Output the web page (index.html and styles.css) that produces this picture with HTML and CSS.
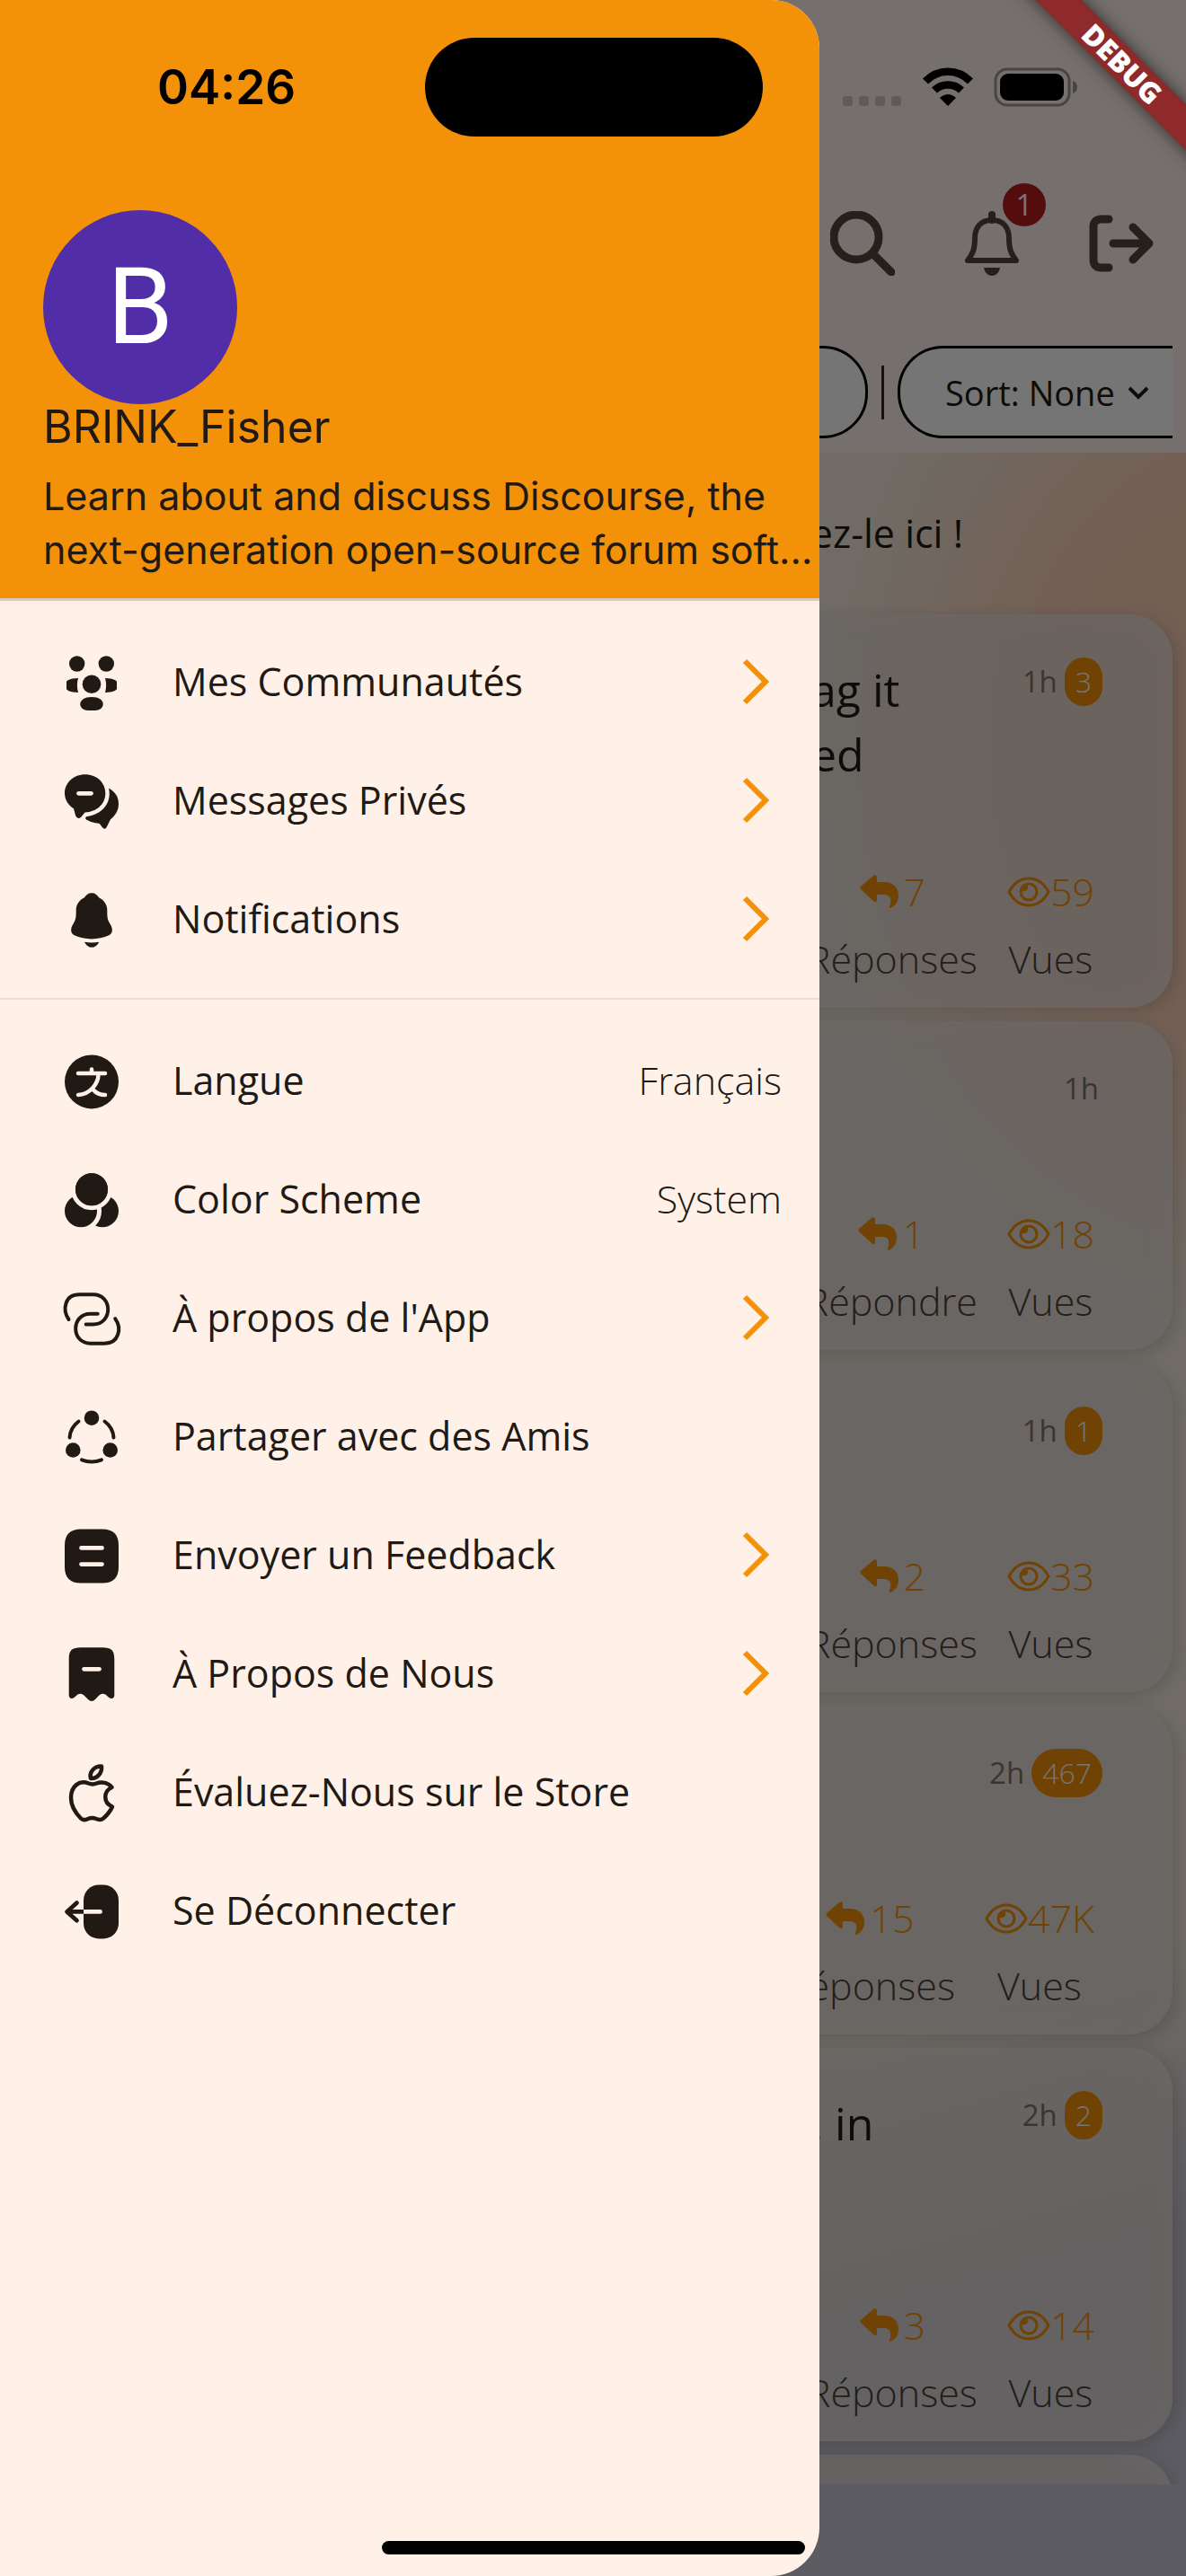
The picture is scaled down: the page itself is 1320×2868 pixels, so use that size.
FILE: index.html
```html
<!DOCTYPE html>
<html lang="fr">
    <head>
        <meta charset="UTF-8" />
        <meta name="viewport" content="width=device-width, initial-scale=1.0" />
        <title>Communautés</title>
        <link rel="stylesheet" href="styles.css">
    </head>
    <body>
        <svg class="sprite" aria-hidden="true">
            <symbol id="chevron" viewBox="0 0 36 54">
                <path d="M6 4 29 27 6 50" fill="none" stroke="currentColor" stroke-width="6" />
            </symbol>
            <symbol id="reply" viewBox="0 0 44 38">
                <path d="M1 13 15 1q4-2 4 2v5h8c11 0 16 7 16 15 0 7-4 12-9 14-2 0-1-1-1-2 3-8 1-13-7-13h-7v6q0 4-4 1L1 16q-1-1.500 0-3z" fill="currentColor" />
            </symbol>
            <symbol id="eye" viewBox="0 0 48 38">
                <path d="M2 19C8 8 15 4 24 4s16 4 22 15c-6 11-13 15-22 15S8 30 2 19z" fill="none" stroke="currentColor" stroke-width="3" />
                <circle cx="24" cy="19" r="9" fill="none" stroke="currentColor" stroke-width="3" />
                <path d="M23 12c1 5-2 7-7 6 1-4 3-6 7-6z" fill="currentColor" />
            </symbol>
        </svg>

        <div class="app">
            <header class="topbar">
                <div class="actions">
                    <button class="icon-btn" aria-label="Rechercher">
                        <svg viewBox="0 0 72 72" fill="none" stroke="currentColor" stroke-width="9">
                            <circle cx="29" cy="29" r="25" />
                            <path d="m48 48 20 20" stroke-linecap="round" />
                        </svg>
                    </button>
                    <button class="icon-btn" aria-label="Notifications">
                        <svg viewBox="0 0 72 72">
                            <path d="M36 10c-12 0-19 8-19 20 0 12-2 17-8 25h54c-6-8-8-13-8-25 0-12-7-20-19-20z" fill="none" stroke="currentColor" stroke-width="6" stroke-linejoin="round" />
                            <path d="M36 4v6" stroke="currentColor" stroke-width="8" stroke-linecap="round" />
                            <path d="M27 63h18c-1 6-5 9-9 9s-8-3-9-9z" fill="currentColor" />
                        </svg>
                        <span class="count">1</span>
                    </button>
                    <button class="icon-btn" aria-label="Se déconnecter">
                        <svg viewBox="0 0 72 72" fill="none" stroke="currentColor" stroke-width="9" stroke-linecap="round" stroke-linejoin="round">
                            <path d="M22 9h-8q-9 0-9 9v36q0 9 9 9h8M27 36h39M49 18l18 18-18 18" />
                        </svg>
                    </button>
                </div>
                <div class="filters">
                    <button class="pill pill-empty" aria-label="Filtre"></button>
                    <span class="bar"></span>
                    <button class="pill pill-sort">Sort: None
                        <svg viewBox="0 0 24 16" width="24" height="16"><path d="m2 3 10 10L22 3" fill="none" stroke="currentColor" stroke-width="4" /></svg>
                    </button>
                </div>
            </header>

            <main class="feed">
                <p class="prompt">ez-le ici !</p>

                <article class="card card-tall">
                    <div class="card-head">
                        <h2>ag it<br />ed</h2>
                        <span class="time">1h</span><span class="badge">3</span>
                    </div>
                    <div class="stats">
                        <div class="stat"><span class="num reply"><svg><use href="#reply" /></svg>7</span><span>Réponses</span></div>
                        <div class="stat"><span class="num"><svg><use href="#eye" /></svg>59</span><span>Vues</span></div>
                    </div>
                </article>

                <article class="card">
                    <div class="card-head">
                        <span class="time">1h</span>
                    </div>
                    <div class="stats">
                        <div class="stat"><span class="num reply"><svg><use href="#reply" /></svg>1</span><span>Répondre</span></div>
                        <div class="stat"><span class="num"><svg><use href="#eye" /></svg>18</span><span>Vues</span></div>
                    </div>
                </article>

                <article class="card">
                    <div class="card-head">
                        <span class="time">1h</span><span class="badge">1</span>
                    </div>
                    <div class="stats">
                        <div class="stat"><span class="num reply"><svg><use href="#reply" /></svg>2</span><span>Réponses</span></div>
                        <div class="stat"><span class="num"><svg><use href="#eye" /></svg>33</span><span>Vues</span></div>
                    </div>
                </article>

                <article class="card">
                    <div class="card-head">
                        <span class="time">2h</span><span class="badge">467</span>
                    </div>
                    <div class="stats">
                        <div class="stat"><span class="num reply"><svg><use href="#reply" /></svg>15</span><span>Réponses</span></div>
                        <div class="stat"><span class="num"><svg><use href="#eye" /></svg>47K</span><span>Vues</span></div>
                    </div>
                </article>

                <article class="card card-tall">
                    <div class="card-head">
                        <h2>. in</h2>
                        <span class="time">2h</span><span class="badge">2</span>
                    </div>
                    <div class="stats">
                        <div class="stat"><span class="num reply"><svg><use href="#reply" /></svg>3</span><span>Réponses</span></div>
                        <div class="stat"><span class="num"><svg><use href="#eye" /></svg>14</span><span>Vues</span></div>
                    </div>
                </article>

                <article class="card"></article>
            </main>
            <footer class="bottom"></footer>
        </div>

        <div class="scrim"></div>

        <aside class="drawer">
            <div class="profile">
                <div class="avatar">B</div>
                <div class="name">BRINK_Fisher</div>
                <p class="about">Learn about and discuss Discourse, the next-generation open-source forum soft...</p>
            </div>

            <nav class="menu">
                <a class="item" href="#">
                    <svg class="icon" viewBox="0 0 72 72" fill="currentColor">
                        <circle cx="19.700" cy="16" r="8.700" />
                        <circle cx="52.300" cy="16" r="8.700" />
                        <circle cx="36" cy="38.700" r="10.300" />
                        <path d="M21 32C12 32 8 35 8 36v8c0 1 4 4 13 4-1.500-5-1.500-11 0-16zM51 32c9 0 13 3 13 4v8c0 1-4 4-13 4 1.500-5 1.500-11 0-16z" />
                        <path d="M36 53c8 0 12.700 3.500 12.700 8 0 4-4 7-8.700 7h-8c-5 0-8.700-3-8.700-7 0-4.500 5-8 12.700-8z" />
                    </svg>
                    <span>Mes Communautés</span>
                    <svg class="chevron"><use href="#chevron" /></svg>
                </a>
                <a class="item" href="#">
                    <svg class="icon" viewBox="0 0 72 72" fill="currentColor">
                        <path d="M28.700 7.300C16 7.300 6 16.500 6 28.300c0 7 4 13 10 17l2 7.500c1.500 4 5 4 7 1l3.500-4.300C42 49 51.300 40 51.300 28.300S42 7.300 28.700 7.300z" />
                        <path d="M55 22.500C63 27 66 33 66 40c0 8-4 13-9 17.300l-4 8c-1 3-3.500 3-5 1L44.700 62C38 61 34 60 30 57.500c-1.500-1.500-1-3 1-3.500 16-2 28-15 24-31.500z" />
                        <path class="cut" d="M21.500 28.300h14" stroke-width="4.700" />
                    </svg>
                    <span>Messages Privés</span>
                    <svg class="chevron"><use href="#chevron" /></svg>
                </a>
                <a class="item" href="#">
                    <svg class="icon" viewBox="0 0 72 72" fill="currentColor">
                        <path d="M36 7.300c-4 0-6 2-8 5-6 3-9.300 8-9.300 14 0 7 0 10-3 15-4 6-3 11 1 13 11 5.500 27.600 5.500 38.600 0 4-2 5-7 1-13-3-5-3-8-3-15 0-6-3.300-11-9.300-14-2-3-4-5-8-5z" />
                        <path d="M28 61.700q8 1.500 16.300 0c-2 4-5 6-8.200 6s-6-2-8.100-6z" />
                    </svg>
                    <span>Notifications</span>
                    <svg class="chevron"><use href="#chevron" /></svg>
                </a>
            </nav>

            <nav class="menu">
                <a class="item" href="#">
                    <svg class="icon" viewBox="0 0 72 72" fill="currentColor">
                        <circle cx="36" cy="37.400" r="30" />
                        <path class="cut" d="M21 28h30M36 23.500V28M43.500 29c0 11-10 22.500-22.500 23M38 46.500c3 3.500 7 5.500 13 5.500" stroke-width="4.500" />
                    </svg>
                    <span>Langue</span>
                    <span class="value">Français</span>
                </a>
                <a class="item" href="#">
                    <svg class="icon" viewBox="0 0 72 72" fill="currentColor">
                        <circle cx="48" cy="49.300" r="18" />
                        <circle class="ring" cx="24" cy="49.300" r="20.500" />
                        <circle class="ring" cx="36" cy="25.300" r="20.500" />
                        <circle cx="36" cy="25.300" r="18" />
                    </svg>
                    <span>Color Scheme</span>
                    <span class="value">System</span>
                </a>
                <a class="item" href="#">
                    <svg class="icon wide" viewBox="0 0 72 72" fill="none" stroke="currentColor" stroke-width="4" stroke-linecap="round">
                        <path d="M10.500 38C3 27 6 10.300 22.300 10.300h15.400c22 0 22 33.100 0 33.100h-8" />
                        <path d="M42.700 31.700h-8c-22 0-22 33 0 33h15.500c16 0 19.800-16.700 12-27.500" />
                    </svg>
                    <span>À propos de l'App</span>
                    <svg class="chevron"><use href="#chevron" /></svg>
                </a>
                <a class="item" href="#">
                    <svg class="icon" viewBox="0 0 72 72" fill="currentColor">
                        <circle cx="36" cy="15.700" r="8.300" />
                        <circle cx="15.300" cy="51.500" r="8.300" />
                        <circle cx="56.700" cy="51.500" r="8.300" />
                        <path d="M11.500 37.500c.5-7.500 4-13.500 10-18M50.500 19.500c6 4.500 9.500 10.500 10 18M25 62.300q11 4.500 22 0" fill="none" stroke="currentColor" stroke-width="4" stroke-linecap="round" />
                    </svg>
                    <span>Partager avec des Amis</span>
                </a>
                <a class="item" href="#">
                    <svg class="icon" viewBox="0 0 72 72" fill="currentColor">
                        <path d="M24 7.400h24c12 0 18 6 18 18v24c0 12-6 18-18 18H24c-12 0-18-6-18-18v-24c0-12 6-18 18-18z" />
                        <path class="cut" d="M24.500 28.400h23M24.500 46.600h23" stroke-width="4.700" />
                    </svg>
                    <span>Envoyer un Feedback</span>
                    <svg class="chevron"><use href="#chevron" /></svg>
                </a>
                <a class="item" href="#">
                    <svg class="icon" viewBox="0 0 72 72" fill="currentColor">
                        <path d="M24 7.200h24c10 0 13.300 3 13.300 13V60c0 4-3 5-6 3l-4-3.500q-4-2-7 1L40 65q-4 4-8 0l-4.500-4.500q-3-3-7-1l-4 3.500c-3 2-5.800 1-5.800-3V20.200c0-10 3.300-13 13.300-13z" />
                        <path class="cut" d="M27.500 31.300h17" stroke-width="4.700" />
                    </svg>
                    <span>À Propos de Nous</span>
                    <svg class="chevron"><use href="#chevron" /></svg>
                </a>
                <a class="item" href="#">
                    <svg class="icon" viewBox="0 0 72 72" fill="none" stroke="currentColor" stroke-width="4.500" stroke-linejoin="round">
                        <path d="M58.500 31c-4-5-11-7-17-4.500-3 1.200-6 1.200-9 0-10-4-19.500 3-19.500 16 0 9 5 17 11 23 2 2 5 2 8 .5 3-1.300 6-1.300 9 0 3 1.300 5.500 1.500 8-.5 4-3.500 8-8.500 10-13-10-4-10.500-17-.5-21.500z" />
                        <path d="M35 21c-2-7 4-14 12-13.500C48 15 42 21.500 35 21z" />
                    </svg>
                    <span>Évaluez-Nous sur le Store</span>
                </a>
                <a class="item" href="#">
                    <svg class="icon" viewBox="0 0 72 72" fill="currentColor">
                        <rect x="27" y="7.400" width="39" height="60" rx="17" />
                        <path d="M27 37.400H9M19.500 27.500l-11 9.900 11 9.900" fill="none" stroke="currentColor" stroke-width="4.700" stroke-linecap="round" stroke-linejoin="round" />
                        <path d="M27 35h18.500a2.400 2.400 0 0 1 0 4.800H27z" class="cut-fill" />
                    </svg>
                    <span>Se Déconnecter</span>
                </a>
            </nav>
        </aside>

        <div class="debug">DEBUG</div>

        <div class="statusbar">
            <time class="clock">04:26</time>
            <span class="island"></span>
            <span class="signals">
                <svg width="66" height="44" viewBox="0 0 66 44" fill="#5f5b59">
                    <rect y="32" width="11" height="11" rx="3" />
                    <rect x="18" y="32" width="11" height="11" rx="3" />
                    <rect x="36" y="32" width="11" height="11" rx="3" />
                    <rect x="54" y="32" width="11" height="11" rx="3" />
                </svg>
                <svg width="58" height="44" viewBox="0 0 58 44">
                    <path d="M4 15.500c14-14.500 36-14.500 50 0M14 25.500c8-8 22-8 30 0" fill="none" stroke="#000" stroke-width="8.500" />
                    <path d="m29 43-9-9q9-8 18 0z" />
                </svg>
                <svg width="94" height="44" viewBox="0 0 94 44">
                    <rect x="2" y="2" width="82" height="40" rx="13" fill="none" stroke="#474442" stroke-width="3" />
                    <rect x="7" y="7" width="71" height="30" rx="9" />
                    <path d="M88 15q5 2 5 7t-5 7z" fill="#474442" />
                </svg>
            </span>
        </div>
        <span class="home"></span>
    </body>
</html>
```
FILE: styles.css
```css
* {
    box-sizing: border-box;
}
body {
    margin: 0;
    position: relative;
    height: 100vh;
    overflow: hidden;
    font-family: "Open Sans", sans-serif;
    color: #211a14;
    background: #cac8d5;
}
button {
    font: inherit;
    color: inherit;
    border: none;
    background: none;
    padding: 0;
}
.sprite {
    position: absolute;
    width: 0;
    height: 0;
}

/* page behind the drawer */
.app {
    height: 100%;
    display: flex;
    flex-direction: column;
    background:
        radial-gradient(ellipse 480px 620px at 105% 29%, #fccfb6 45%, rgba(252, 207, 182, 0) 100%),
        linear-gradient(165deg, rgba(202, 200, 213, 0) 78%, #cac8d5 88%),
        #f3ebdd;
}
.topbar {
    height: 504px;
    padding-top: 187px;
    background: #fff5ed;
}
.actions {
    height: 168px;
    padding-right: 36px;
    display: flex;
    justify-content: flex-end;
    align-items: center;
    gap: 72px;
    color: #51463c;
}
.icon-btn {
    position: relative;
    width: 72px;
    height: 72px;
}
.icon-btn svg {
    display: block;
}
.count {
    position: absolute;
    top: -31px;
    right: -24px;
    width: 48px;
    height: 48px;
    border-radius: 50%;
    background: #b71c1c;
    color: #fff;
    font-size: 33px;
    line-height: 48px;
    text-align: center;
}
.filters {
    margin-top: 30px;
    padding-right: 15px;
    display: flex;
    justify-content: flex-end;
    align-items: center;
    gap: 15px;
}
.pill {
    height: 103px;
    border: 3px solid #000;
    border-radius: 50px;
    background: #fff;
    font-size: 38px;
}
.pill-empty {
    width: 300px;
}
.pill-sort {
    width: 306px;
    padding-left: 50px;
    display: flex;
    align-items: center;
    gap: 14px;
    border-right: none;
    border-radius: 50px 0 0 50px;
}
.bar {
    width: 3px;
    height: 60px;
    background: #33281e;
}
.feed {
    flex: 1;
    min-height: 0;
    overflow: hidden;
    padding-right: 15px;
    display: flex;
    flex-direction: column;
    gap: 15px;
}
.prompt {
    margin: 0;
    padding: 60px 233px 0 0;
    height: 165px;
    font-size: 43px;
    line-height: 60px;
    font-weight: 500;
    text-align: right;
    flex: none;
}
.card {
    flex: none;
    height: 366px;
    padding: 48px 78px 24px 903px;
    border-radius: 48px;
    background: rgba(226, 218, 212, 0.7);
    box-shadow: inset 0 0 48px rgba(255, 245, 240, 0.2), 4px 4px 18px rgba(60, 50, 40, 0.2);
    display: flex;
    flex-direction: column;
    justify-content: space-between;
}
.card-tall {
    height: 438px;
}
.card-head {
    display: flex;
    justify-content: flex-end;
    align-items: flex-start;
}
.card h2 {
    margin: 0 auto 0 0;
    font-size: 50px;
    line-height: 72px;
    font-weight: 500;
}
.time {
    padding-right: 4px;
    font-size: 33px;
    line-height: 54px;
    color: #7d746c;
}
.badge {
    margin-left: 4px;
    padding: 0 12px;
    border-radius: 27px;
    background: #f39109;
    color: #fff;
    font-size: 32px;
    line-height: 54px;
    font-weight: 300;
}
.stats {
    display: flex;
    justify-content: flex-end;
    gap: 33px;
    padding-right: 9px;
    font-size: 43px;
    line-height: 60px;
    font-weight: 300;
    color: #4c433a;
}
.stat {
    display: flex;
    flex-direction: column;
    align-items: center;
    gap: 15px;
}
.num {
    display: flex;
    align-items: center;
    color: #f39109;
}
.num svg {
    width: 48px;
    height: 38px;
}
.reply svg {
    width: 44px;
    margin-right: 5px;
}
.bottom {
    height: 102px;
    background: #cac8d5;
}
.scrim {
    position: absolute;
    inset: 0;
    background: rgba(0, 0, 0, 0.54);
}

/* drawer */
.drawer {
    position: absolute;
    top: 0;
    bottom: 0;
    left: 0;
    width: 912px;
    border-radius: 0 54px 54px 0;
    overflow: hidden;
    background: #fff1e8;
}
.profile {
    height: 669px;
    padding: 234px 0 0 48px;
    border-bottom: 3px solid #dcc9bc;
    background: #f39109;
    font-family: Inter, sans-serif;
}
.avatar {
    width: 216px;
    height: 216px;
    border-radius: 50%;
    background: #512da8;
    color: #fff;
    font: 118px/216px Roboto, sans-serif;
    text-align: center;
}
.name {
    font-size: 50px;
    line-height: 51px;
}
.about {
    margin: 21px 0 0;
    font-size: 43px;
    line-height: 60px;
}
.menu {
    padding: 24px 42px 22px 66px;
}
.menu + .menu {
    border-top: 2px solid #ebdccf;
}
.item {
    height: 132px;
    display: flex;
    align-items: center;
    color: inherit;
    text-decoration: none;
    font-size: 43px;
    line-height: 60px;
}
.icon {
    width: 72px;
    height: 72px;
    margin-right: 54px;
    overflow: visible;
}
.chevron {
    width: 36px;
    height: 54px;
    margin: 0 11px 0 auto;
    color: #f39109;
}
.value {
    margin-left: auto;
    font-weight: 300;
}
.cut {
    fill: none;
    stroke: #fff1e8;
    stroke-linecap: round;
}
.cut-fill {
    fill: #fff1e8;
}
.ring {
    stroke: #fff1e8;
    stroke-width: 5px;
}

/* system layer */
.statusbar {
    position: absolute;
    top: 0;
    left: 0;
    right: 0;
    height: 194px;
    padding: 0 120px 0 175px;
    display: flex;
    justify-content: space-between;
    align-items: center;
}
.clock {
    width: 208px;
    font: 600 53px/60px Inter, sans-serif;
    color: #000;
}
.island {
    width: 376px;
    height: 110px;
    border-radius: 55px;
    background: #000;
}
.signals {
    display: flex;
    gap: 22px;
}
.home {
    position: absolute;
    bottom: 24px;
    left: 50%;
    width: 471px;
    height: 15px;
    margin-left: -235px;
    border-radius: 8px;
    background: #000;
}
.debug {
    position: absolute;
    top: 53px;
    right: -79px;
    width: 300px;
    height: 36px;
    transform: rotate(45deg);
    background: #8e2a2a;
    box-shadow: 0 0 18px rgba(0, 0, 0, 0.6);
    color: #fff;
    font-size: 32px;
    line-height: 36px;
    font-weight: 800;
    text-align: center;
}
```
